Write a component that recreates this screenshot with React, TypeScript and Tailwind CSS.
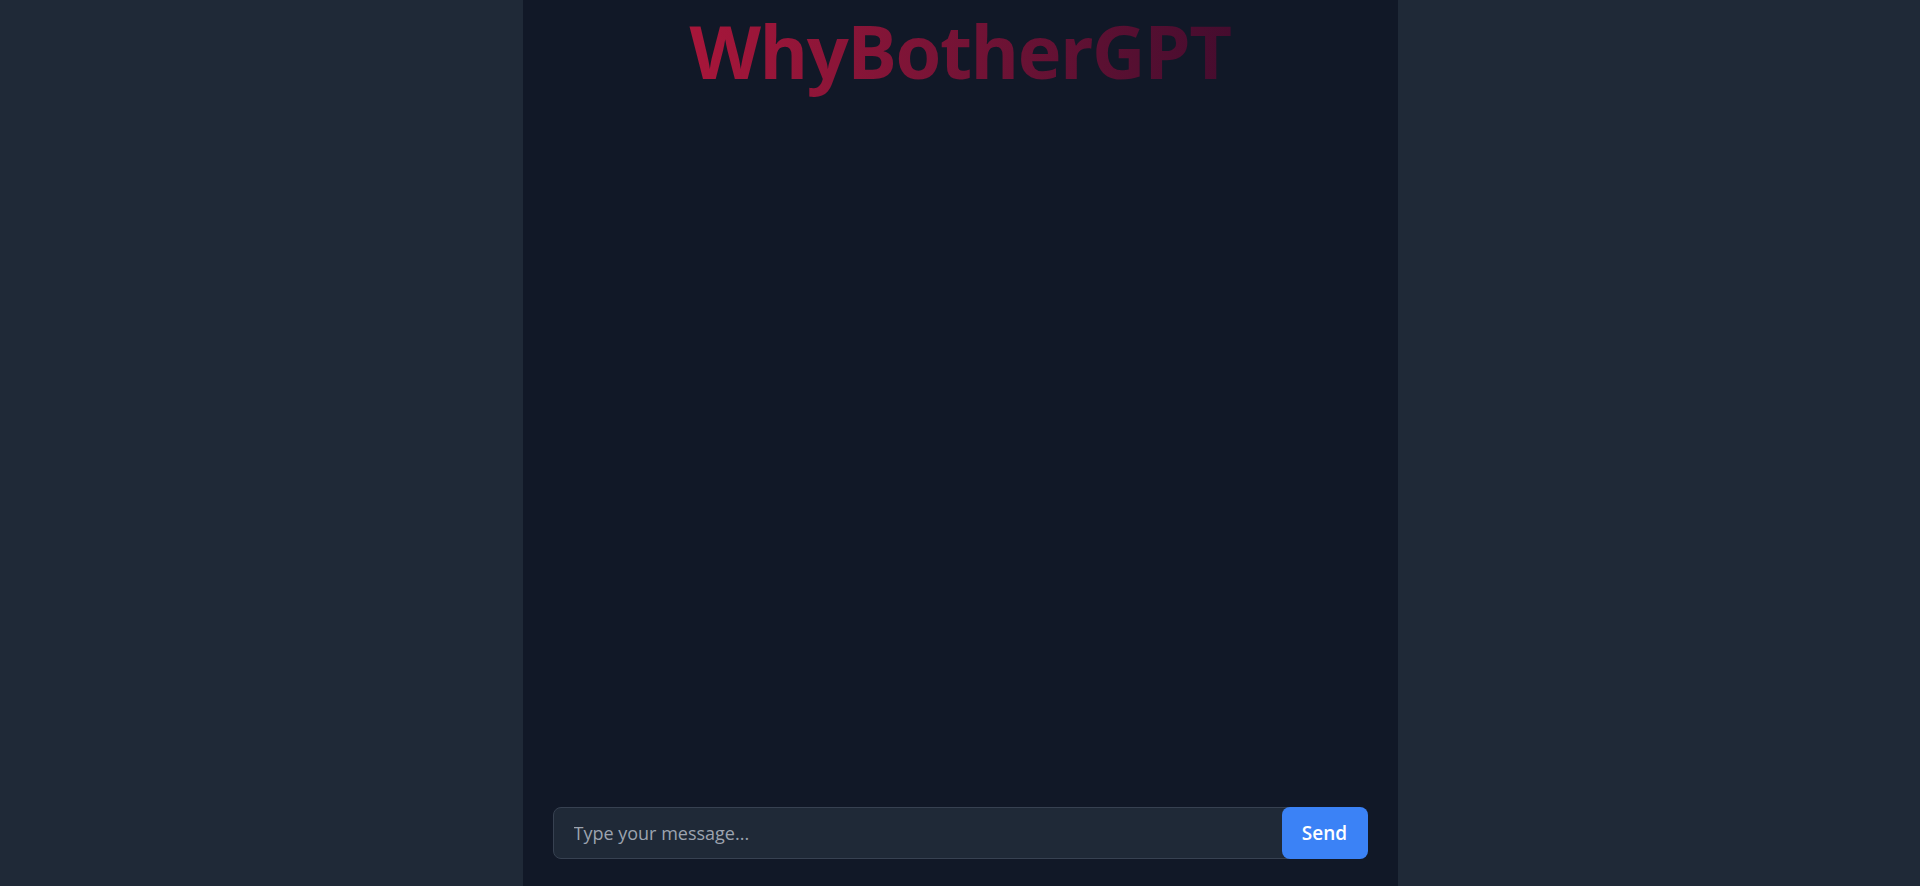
export default function App() {
  return (
    <div className="min-h-screen h-screen w-full bg-[#1f2937] flex justify-center" style={{ fontFamily: '"Open Sans", "Noto Sans", sans-serif' }}>
      <div className="w-[875px] h-full bg-[#111827] flex flex-col">
        {/* title */}
        <h1 className="text-center text-[74px] leading-none font-bold tracking-[-0.02em] pt-[14px] pb-2">
          <span className="bg-gradient-to-r from-[#a8163a] to-[#450c2e] bg-clip-text text-transparent">
            WhyBotherGPT
          </span>
        </h1>

        {/* messages */}
        <div className="flex-1" />

        {/* input */}
        <form className="px-[30px] pb-[27px] flex" onSubmit={(e) => e.preventDefault()}>
          <input
            type="text"
            placeholder="Type your message..."
            className="flex-1 h-[52px] bg-[#1f2937] border border-[#374151] rounded-l-lg pl-5 text-lg text-white placeholder:text-[#9ca3af] outline-none"
          />
          <button
            type="submit"
            className="w-[86px] h-[52px] -ml-2 bg-[#3b82f6] rounded-lg text-white text-[19px] font-semibold"
          >
            Send
          </button>
        </form>
      </div>
    </div>
  );
}
